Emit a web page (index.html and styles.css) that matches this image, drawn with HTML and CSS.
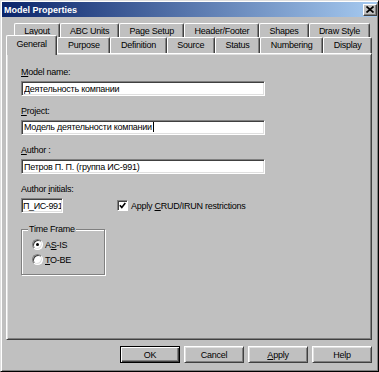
FILE: index.html
```html
<!DOCTYPE html>
<html lang="en">
<head>
    <meta charset="UTF-8">
    <title>Model Properties</title>
    <link rel="stylesheet" href="styles.css">
</head>
<body>
    <div class="dialog">
        <div class="titlebar">
            <span class="title">Model Properties</span>
            <span class="close-btn">
                <svg width="8" height="7" viewBox="0 0 8 7"><path d="M0.5 0.5 L7.5 6.5 M7.5 0.5 L0.5 6.5" stroke="#000" stroke-width="1.7"/></svg>
            </span>
        </div>

        <div class="tabstrip">
            <div class="tab-row back">
                <div class="tab">Layout</div>
                <div class="tab">ABC Units</div>
                <div class="tab">Page Setup</div>
                <div class="tab">Header/Footer</div>
                <div class="tab">Shapes</div>
                <div class="tab">Draw Style</div>
            </div>
            <div class="tab-row front">
                <div class="tab active">General</div>
                <div class="tab">Purpose</div>
                <div class="tab">Definition</div>
                <div class="tab">Source</div>
                <div class="tab">Status</div>
                <div class="tab">Numbering</div>
                <div class="tab">Display</div>
            </div>

            <div class="panel">
                <div class="field">
                    <label for="modelName"><u>M</u>odel name:</label>
                    <input class="textbox" type="text" id="modelName" value="Деятельность компании">
                </div>
                <div class="field">
                    <label for="project"><u>P</u>roject:</label>
                    <div class="textbox">Модель деятельности компании<span class="caret"></span></div>
                </div>
                <div class="field">
                    <label for="author"><u>A</u>uthor :</label>
                    <input class="textbox" type="text" id="author" value="Петров П. П. (группа ИС-991)">
                </div>

                <div class="initials-row">
                    <div class="field initials">
                        <label for="initials">Author <u>i</u>nitials:</label>
                        <input class="textbox short" type="text" id="initials" value="П_ИС-991">
                    </div>
                    <div class="check-option">
                        <span class="checkbox">
                            <svg width="7" height="7" viewBox="0 0 7 7"><path d="M0.8 3.2 L2.8 5.4 L6.3 1" stroke="#000" stroke-width="1.6" fill="none"/></svg>
                        </span>
                        <span>Apply <u>C</u>RUD/IRUN restrictions</span>
                    </div>
                </div>

                <fieldset class="group">
                    <legend>Time Frame</legend>
                    <div class="radio-option">
                        <span class="radio checked"></span>
                        <span>A<u>S</u>-IS</span>
                    </div>
                    <div class="radio-option">
                        <span class="radio"></span>
                        <span><u>T</u>O-BE</span>
                    </div>
                </fieldset>
            </div>
        </div>

        <div class="buttons">
            <button class="btn default">OK</button>
            <button class="btn">Cancel</button>
            <button class="btn"><u>A</u>pply</button>
            <button class="btn">Help</button>
        </div>
    </div>
</body>
</html>
```

FILE: styles.css
```css
body {
    margin: 0;
    font-family: "Liberation Sans", Arial, sans-serif;
    font-size: 9px;
    letter-spacing: -0.25px;
    color: #000;
}

.dialog {
    width: 379px;
    height: 372px;
    box-sizing: border-box;
    background: #c0c0c0;
    border: 1px solid;
    border-color: #dfdfdf #000 #000 #dfdfdf;
    box-shadow: inset 1px 1px #fff, inset -1px -1px #808080;
    padding: 1px;
}

.titlebar {
    height: 15px;
    display: flex;
    align-items: center;
    justify-content: space-between;
    padding-left: 2px;
    background: linear-gradient(to right, #0a246a, #a6caf0);
    color: #fff;
    font-weight: bold;
    letter-spacing: 0;
}

.close-btn {
    width: 14px;
    height: 12px;
    box-sizing: border-box;
    background: #c0c0c0;
    border: 1px solid;
    border-color: #fff #404040 #404040 #fff;
    box-shadow: inset -1px -1px #808080;
    display: flex;
    align-items: center;
    justify-content: center;
}

.tabstrip {
    margin: 6px 0 0 4px;
    width: 366px;
}

.tab-row {
    display: flex;
}

.tab-row.back {
    height: 15px;
    margin: 0 2px 0 8px;
}

.tab-row.front {
    height: 16px;
    margin-top: -1px;
}

.tab {
    flex: 1 1 auto;
    text-align: center;
    line-height: 14px;
    white-space: nowrap;
    background: #c0c0c0;
    border-top: 1px solid #fff;
    border-left: 1px solid #fff;
    border-right: 1px solid #404040;
    box-shadow: inset -1px 0 #808080;
    border-radius: 2px 2px 0 0;
}

.tab.active {
    position: relative;
    z-index: 1;
    box-sizing: border-box;
    height: 20px;
    margin-top: -2px;
    padding-top: 1px;
}

.panel {
    height: 287px;
    box-sizing: border-box;
    border: 1px solid;
    border-color: #fff #404040 #404040 #fff;
    box-shadow: inset 1px 1px #dfdfdf, inset -1px -1px #808080;
    padding: 12px 14px;
}

.field {
    margin-bottom: 9px;
}

.field label {
    display: block;
    line-height: 12px;
    margin-bottom: 3px;
    white-space: nowrap;
}

.textbox {
    display: block;
    width: 244px;
    height: 15px;
    box-sizing: border-box;
    margin: 0;
    padding: 0 2px;
    background: #fff;
    border: 1px solid;
    border-color: #808080 #fff #fff #808080;
    box-shadow: inset 1px 1px #404040, inset -1px -1px #dfdfdf;
    font: inherit;
    letter-spacing: inherit;
    line-height: 13px;
    color: #000;
    outline: none;
}

.textbox.short {
    width: 42px;
    padding: 0 1px;
    letter-spacing: -0.4px;
}

.caret {
    display: inline-block;
    width: 1px;
    height: 10px;
    margin-left: 1px;
    background: #000;
    vertical-align: -2px;
}

.initials-row {
    display: flex;
    align-items: flex-end;
    margin-top: 2px;
}

.initials-row .field {
    width: 42px;
    margin-bottom: 0;
}

.check-option {
    display: flex;
    align-items: center;
    gap: 3px;
    height: 15px;
    margin-left: 54px;
}

.checkbox,
.radio {
    width: 11px;
    height: 11px;
    box-sizing: border-box;
    background: #fff;
    border: 1px solid;
    border-color: #808080 #fff #fff #808080;
    box-shadow: inset 1px 1px #404040;
    display: flex;
    align-items: center;
    justify-content: center;
}

.radio {
    border-radius: 50%;
    box-shadow: inset 1px 1px #404040, inset -1px -1px #dfdfdf;
}

.radio.checked::after {
    content: '';
    width: 3px;
    height: 3px;
    border-radius: 50%;
    background: #000;
}

.group {
    width: 84px;
    box-sizing: border-box;
    margin: 10px 0 0;
    padding: 2px 8px 7px 10px;
    border: 1px solid #808080;
    box-shadow: inset 1px 1px #fff, 1px 1px #fff;
}

.group legend {
    padding: 0 1px;
    margin-left: -4px;
    line-height: 12px;
    background: #c0c0c0;
}

.radio-option {
    display: flex;
    align-items: center;
    gap: 2px;
    height: 15px;
}

.buttons {
    display: flex;
    justify-content: flex-end;
    gap: 4px;
    width: 366px;
    margin: 6px 0 0 4px;
}

.btn {
    width: 60px;
    height: 17px;
    box-sizing: border-box;
    padding: 0;
    background: #c0c0c0;
    border: 1px solid;
    border-color: #fff #404040 #404040 #fff;
    box-shadow: inset 1px 1px #dfdfdf, inset -1px -1px #808080;
    font: inherit;
    letter-spacing: inherit;
    color: #000;
}

.btn.default {
    border-color: #000;
    box-shadow: inset 1px 1px #fff, inset -1px -1px #404040, inset -2px -2px #808080;
}
```
